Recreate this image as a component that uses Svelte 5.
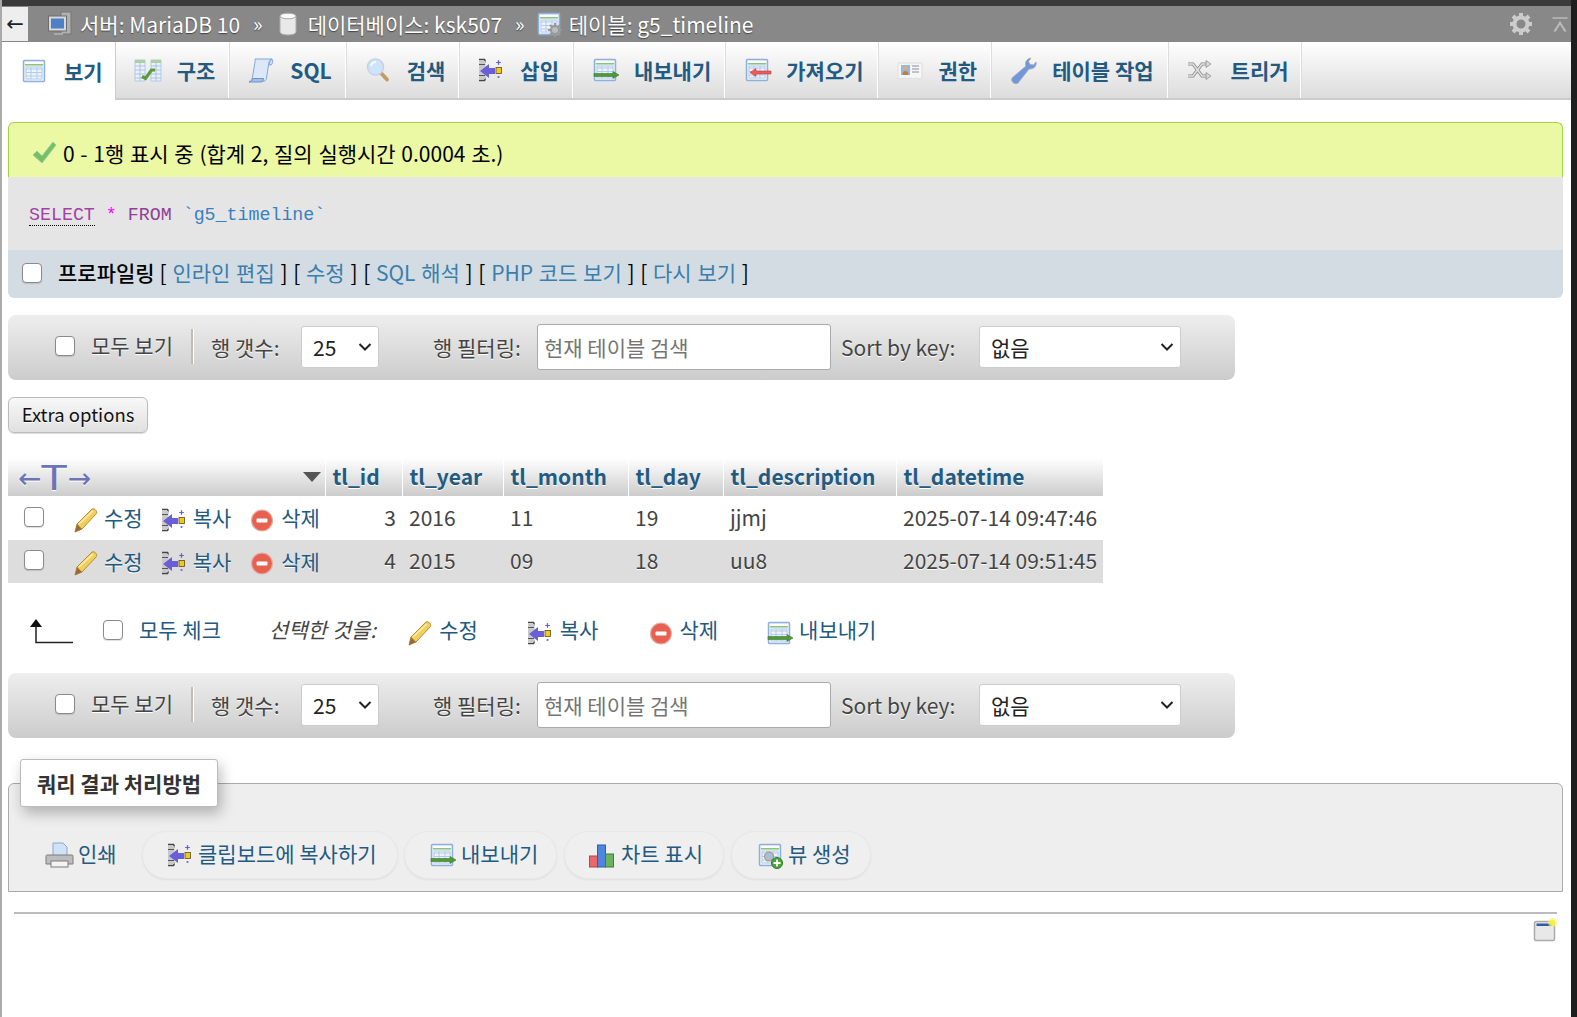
<script>
  const tabs = [
    ['table', '보기', true], ['structure', '구조'], ['sql', 'SQL'], ['search', '검색'], ['insert', '삽입'],
    ['export', '내보내기'], ['import', '가져오기'], ['priv', '권한'], ['ops', '테이블 작업'], ['trigger', '트리거']
  ];
  const rows = [
    [3, '2016', '11', '19', 'jjmj', '2025-07-14 09:47:46'],
    [4, '2015', '09', '18', 'uu8', '2025-07-14 09:51:45']
  ];
</script>

{#snippet grid()}
  <rect x="1.500" y="1.500" width="21" height="21" rx="1" fill="#edf3fb" stroke="#8db0dc" stroke-width="1.500"/>
  <rect x="3" y="3" width="18" height="2" fill="#fff"/>
  <rect x="3" y="5" width="18" height="1.500" fill="#8cc47a"/>
  <path d="M4 10h16M4 13.500h16M4 17h16M9 8v12M15 8v12M4 8h16v12H4z" stroke="#b4cbe8" fill="none"/>
{/snippet}

{#snippet film()}
  <path d="M0 1.500h6M6 1.500v3M0 22.500h6M6 22.500v-3" stroke="#444" stroke-width="1.500" fill="none"/>
  <rect x="0" y="3" width="6.500" height="18" fill="#c9c9c9"/>
  <path d="M0 6.500h6M0 17.500h6" stroke="#555" stroke-width="1.200"/>
  <path d="M1 13l9-7v4h6v6h-6v4z" fill="#6a5fd8"/>
  <rect x="17" y="9.500" width="5.500" height="6" fill="#f0c81e" stroke="#5a4f18" stroke-width=".8"/>
  <path d="M19.500 2v5M17 4.500h5" stroke="#7a72e0" stroke-width="1.200"/>
  <circle cx="19.500" cy="4.500" r="1" fill="#5a52d0"/>
  <circle cx="19.500" cy="19" r="1.100" fill="#6a63d6"/>
{/snippet}

{#snippet icon(n)}
  <svg class="ic" viewBox="0 0 24 24" aria-hidden="true">
    {#if n === 'table'}
      {@render grid()}
    {:else if n === 'structure'}
      <path d="M-1 2h10v21H-1zM15 2h10v21H15z" fill="#eaf1fa" stroke="#b4cbe8"/>
      <path d="M-1 2h10v3H-1zM15 2h10v3H15z" fill="#a9d2a0"/>
      <path d="M-1 8h10M-1 12h10M-1 16h10M-1 20h10M15 8h10M15 12h10M15 16h10M15 20h10M4 5v18M20 5v18" stroke="#9db9e0" stroke-width=".8"/>
      <path d="M6 18.500l3.500 2 6-8.500h3.500" fill="none" stroke="#5d9a3a" stroke-width="3.200"/>
    {:else if n === 'sql'}
      <path d="M6 1h17c-2.500 1-3 2-3.500 6l-2 13c-.4 2.500-2 3.500-4 3.500H0c2.500-.5 3-2 3.500-4.500L5.500 7c.3-2.500 1-4 .5-6z" fill="#dbe8f8" stroke="#84a6d6"/>
      <path d="M0 24c2.500-.5 3.500-2 3.500-3.500h11c0 2-1 3.500-2.500 3.500z" fill="#9fc0ea" stroke="#6d93c7"/>
      <path d="M20 7c.4-3 1.500-5 3-6 1.500 2 .5 5-1 6z" fill="#cfe0f5" stroke="#84a6d6"/>
    {:else if n === 'search'}
      <path d="M14.500 14.500l6.500 7" stroke="#c59a63" stroke-width="3.800" stroke-linecap="round"/>
      <circle cx="9.500" cy="9" r="8" fill="#cfe3fa" stroke="#c2d3e6" stroke-width="1.500"/>
      <path d="M5 8a5 5 0 0 1 5-4" fill="none" stroke="#fff" stroke-width="1.500"/>
    {:else if n === 'insert' || n === 'copy'}
      {@render film()}
    {:else if n === 'export'}
      {@render grid()}
      <path d="M1 15.500h19v-2l6 3.500-6 3.500v-2H1z" fill="#4f9a38" stroke="#3a7a28" stroke-width=".6"/>
    {:else if n === 'import'}
      {@render grid()}
      <path d="M26 13H11v-2.500L5 14.500l6 4V16h15z" fill="#ee5b5b" stroke="#c53b3b" stroke-width=".6"/>
    {:else if n === 'priv'}
      <path d="M0 5h24v15l-3 1-3-1-3 1-3-1-3 1-3-1-3 1-3-1z" fill="#f6f6f6" stroke="#ddd"/>
      <rect x="3" y="7" width="9" height="10" fill="#8cbbe8"/>
      <circle cx="7.500" cy="10" r="2.200" fill="#e2ab7c"/>
      <path d="M4.500 17c0-3 1.500-4 3-4s3 1 3 4z" fill="#c67a3d"/>
      <path d="M14 8h7M14 11h7M14 14h7" stroke="#aab3bb" stroke-width="1.300"/>
    {:else if n === 'ops'}
      <path d="M1 20L15 8c-1.500-3 0-7 5-8l-2.500 3.500 1.500 3 3.500.5L25 4c1 4-2.500 7.500-7 7L7 25c-2.500 2-7.500-.5-6-5z" fill="#6f98dc" stroke="#a6a6a6" stroke-width=".8"/>
    {:else if n === 'trigger'}
      <path d="M0 6h5l9 12h5M0 18h5l9-12h5" fill="none" stroke="#888" stroke-width="3.200"/>
      <path d="M0 6h5l9 12h5M0 18h5l9-12h5" fill="none" stroke="#e2e2e2" stroke-width="1.600"/>
      <path d="M18 2.500l5 3.500-5 3.500zM18 14.500l5 3.500-5 3.500z" fill="#d8d8d8" stroke="#888" stroke-width=".7"/>
    {:else if n === 'pencil'}
      <path d="M1 24l2-8L18 1c2.500-1 5.500 2 4.500 4.500L8 21z" fill="#f1cf5e" stroke="#b58f2b"/>
      <path d="M1 24l2-8 5 5z" fill="#9a6a3a"/>
      <path d="M5 16L19 3" stroke="#fbeeb0" stroke-width="1.500"/>
    {:else if n === 'del'}
      <circle cx="12" cy="12.500" r="10.500" fill="#e8604f" stroke="#e0b0a8" stroke-width="1.200"/>
      <rect x="6.500" y="10.500" width="11" height="4" rx="1" fill="#fff"/>
    {:else if n === 'print'}
      <path d="M7 0h10l4 4v9H7z" fill="#cfe2f8" stroke="#8aa8cf"/>
      <path d="M1 12h25c1 0 1 1 1 2v7H0v-7c0-1 0-2 1-2z" fill="#bdbdbd" stroke="#7c7c7c"/>
      <rect x="5" y="18" width="17" height="6" fill="#f4f4f4" stroke="#7c7c7c"/>
    {:else if n === 'chart'}
      <rect x="0.500" y="13" width="8" height="11" fill="#e9686a" stroke="#b44"/>
      <rect x="8.500" y="2" width="8" height="22" fill="#4f86dd" stroke="#2f5fb0"/>
      <rect x="16.500" y="11" width="8" height="13" fill="#6cb35c" stroke="#3f7f2e"/>
    {:else if n === 'view'}
      {@render grid()}
      <circle cx="11" cy="13.500" r="4.500" fill="#a9bfd8" stroke="#b08a5a"/>
      <circle cx="19" cy="20" r="5.500" fill="#4ea33a" stroke="#2f7a22"/>
      <path d="M19 16.500v7M15.500 20h7" stroke="#fff" stroke-width="1.800"/>
    {:else if n === 'server'}
      <rect x="13" y="0" width="10" height="22" fill="#b0b0b0" stroke="#777"/>
      <rect x="0.500" y="4" width="18" height="15" fill="#d8d8d8" stroke="#6d6d6d"/>
      <rect x="3" y="6.500" width="13" height="10" fill="#4f7fc8"/>
      <path d="M6 22h9" stroke="#aaa" stroke-width="2"/>
    {:else if n === 'db'}
      <path d="M4 4v16c0 4 16 4 16 0V4z" fill="#e8e8e8" stroke="#aaa"/>
      <ellipse cx="12" cy="4" rx="8" ry="2.800" fill="#fafafa" stroke="#aaa"/>
    {:else if n === 'tablecog'}
      {@render grid()}
      <path d="M18 11v14M11 18h14M13 13l10 10M23 13L13 23" stroke="#999" stroke-width="2.200"/>
      <circle cx="18" cy="18" r="4" fill="#bbb" stroke="#999" stroke-width="2"/>
    {:else if n === 'gear'}
      <path d="M12 1v5M12 18v5M1 12h5M18 12h5M4 4l4 4M16 16l4 4M20 4l-4 4M8 16l-4 4" stroke="#ccc" stroke-width="4"/>
      <circle cx="12" cy="12" r="6.500" fill="none" stroke="#ccc" stroke-width="4"/>
    {:else if n === 'collapse'}
      <path d="M2 3h20v2H2zM12 8L3 22h3.500L12 13l5.500 9H21z" fill="#bbb"/>
    {:else if n === 'check'}
      <path d="M1 14l4-4 5 5L21 1l3 3L10 22z" fill="#72c262" stroke="#a2c8a0" stroke-width="1"/>
    {:else if n === 'console'}
      <rect x="1.500" y="3.500" width="20" height="19" rx="1.500" fill="#e8e8e8" stroke="#aaa" stroke-width="1.500"/>
      <rect x="3.500" y="5.500" width="15" height="2.500" fill="#2f5ba8"/>
      <circle cx="19.500" cy="4.500" r="4.500" fill="#f8f56a" opacity=".7"/>
      <circle cx="19.500" cy="4.500" r="2.500" fill="#f4f13c"/>
    {/if}
  </svg>
{/snippet}

{#snippet navbar()}
  <div class="nav">
    <input type="checkbox" class="cb cb-all" />
    <span class="all">모두 보기</span>
    <span class="divider"></span>
    <span class="rows-l">행 갯수:</span>
    <select class="sel-rows"><option>25</option></select>
    <span class="filter-l">행 필터링:</span>
    <input class="filter" type="text" placeholder="현재 테이블 검색" />
    <span class="sort-l">Sort by key:</span>
    <select class="sel-key"><option>없음</option></select>
  </div>
{/snippet}

<div class="app">
  <div class="top"></div>
  <div class="crumb">
    <button class="back">←</button>
    <span class="c-ic c1">{@render icon('server')}</span><span>서버: MariaDB 10</span>
    <span class="sep">»</span>
    <span class="c-ic">{@render icon('db')}</span><span>데이터베이스: ksk507</span>
    <span class="sep">»</span>
    <span class="c-ic c3">{@render icon('tablecog')}</span><span>테이블: g5_timeline</span>
    <span class="gear">{@render icon('gear')}</span>
    <span class="coll">{@render icon('collapse')}</span>
  </div>
  <div class="tabs">
    {#each tabs as t}
      <a class="tab" class:active={t[2]} href="#top">{@render icon(t[0])}<span>{t[1]}</span></a>
    {/each}
  </div>

  <div class="content">
    <div class="msg"><span class="chk">{@render icon('check')}</span>0 - 1행 표시 중 (합계 2, 질의 실행시간 0.0004 초.)</div>
    <div class="sqlq"><span class="kw1">SELECT</span> <span class="star">*</span> <span class="kw2">FROM</span> <span class="id">`g5_timeline`</span></div>
    <div class="prof">
      <input type="checkbox" class="cb" />
      <b>프로파일링</b><span class="pl">[ <a href="#top">인라인 편집</a> ] [ <a href="#top">수정</a> ] [ <a href="#top">SQL 해석</a> ] [ <a href="#top">PHP 코드 보기</a> ] [ <a href="#top">다시 보기</a> ]</span>
    </div>

    {@render navbar()}

    <button class="extra">Extra options</button>

    <table>
      <colgroup><col class="w0"/><col class="w1"/><col class="w2"/><col class="w3"/><col class="w4"/><col class="w5"/><col class="w6"/></colgroup>
      <thead>
        <tr>
          <th class="first"><div class="th0"><span class="arrows"><span class="ar">←</span><span class="tt">T</span><span class="ar">→</span></span><span class="tri"></span></div></th>
          <th>tl_id</th><th>tl_year</th><th>tl_month</th><th>tl_day</th><th>tl_description</th><th>tl_datetime</th>
        </tr>
      </thead>
      <tbody>
        {#each rows as r}
          <tr>
            <td class="acts">
              <div class="acts-in">
                <input type="checkbox" class="cb cb-row" />
                <a class="a1" href="#top">{@render icon('pencil')}<span>수정</span></a>
                <a class="a2" href="#top">{@render icon('copy')}<span>복사</span></a>
                <a class="a3" href="#top">{@render icon('del')}<span>삭제</span></a>
              </div>
            </td>
            <td class="num">{r[0]}</td>
            <td>{r[1]}</td><td>{r[2]}</td><td>{r[3]}</td><td>{r[4]}</td><td>{r[5]}</td>
          </tr>
        {/each}
      </tbody>
    </table>

    <div class="bulk">
      <svg class="up" viewBox="0 0 45 26" aria-hidden="true"><path d="M8 1L2 9h12z" fill="#111"/><path d="M8 8v16.500h37" fill="none" stroke="#222" stroke-width="1.500"/></svg>
      <input type="checkbox" class="cb" />
      <a class="b-all" href="#top">모두 체크</a>
      <i class="b-sel">선택한 것을:</i>
      <a class="b b-e" href="#top">{@render icon('pencil')}<span>수정</span></a>
      <a class="b b-c" href="#top">{@render icon('copy')}<span>복사</span></a>
      <a class="b b-d" href="#top">{@render icon('del')}<span>삭제</span></a>
      <a class="b b-x" href="#top">{@render icon('export')}<span>내보내기</span></a>
    </div>

    {@render navbar()}

    <div class="fs">
      <div class="legend">쿼리 결과 처리방법</div>
      <div class="ops">
        <a class="op plain" href="#top">{@render icon('print')}<span>인쇄</span></a>
        <a class="op o2" href="#top">{@render icon('copy')}<span>클립보드에 복사하기</span></a>
        <a class="op o3" href="#top">{@render icon('export')}<span>내보내기</span></a>
        <a class="op o4" href="#top">{@render icon('chart')}<span>차트 표시</span></a>
        <a class="op o5" href="#top">{@render icon('view')}<span>뷰 생성</span></a>
      </div>
    </div>
    <div class="rule"></div>
    <div class="cons">{@render icon('console')}</div>
  </div>
</div>

<style>
  :global(body) { margin: 0; background: #fff; overflow: hidden; }
  .app {
    box-sizing: border-box;
    width: 1577px; height: 1017px;
    border-left: 2px solid #aaa;
    border-right: 6px solid #1e1e1e;
    font-family: "Noto Sans CJK KR", "Noto Sans", sans-serif;
    font-size: 21px;
    color: #444;
    background: #fff;
    overflow: hidden;
  }
  a { text-decoration: none; color: #235a81; }
  .ic { width: 24px; height: 24px; display: block; flex: none; overflow: visible; }
  .top { height: 6px; background: #3a3a3a; margin-left: -2px; }
  .crumb {
    height: 36px; background: #888; color: #fff;
    display: flex; align-items: center;
    text-shadow: 0 1px 1px #444;
    line-height: 36px;
  }
  .back {
    width: 26px; height: 34px; margin: 0; padding: 0; border: 0;
    background: #eee; color: #222; font: 21px "DejaVu Sans", sans-serif;
  }
  .c-ic { margin-right: 8px; }
  .c1 { margin-left: 20px; }
  .c3 { margin-left: -1px; }
  .sep { margin: 0 13px; font-size: 20px; }
  .gear { margin-left: auto; margin-right: 18px; }
  .coll { margin-right: 2px; }
  .coll :global(svg) { width: 18px; height: 18px; }

  .tabs {
    display: flex; height: 58px; box-sizing: border-box;
    background: linear-gradient(#fff, #dcdcdc);
    border-bottom: 2px solid #ccc;
  }
  .tab {
    display: flex; align-items: center; gap: 17px;
    padding: 0 13px 0 20px;
    border-right: 1px solid #fff;
    font-weight: 700; color: #235a81;
    box-shadow: 1px 0 0 #ddd;
  }
  .tab.active { background: #fff; height: 58px; gap: 18px; padding-right: 12px; box-shadow: none; border-right: 1px solid #ccc; }
  .tab:last-child { gap: 19px; padding-right: 11px; }

  .content { margin: 22px 8px 0 6px; }
  .msg {
    height: 55px; box-sizing: border-box;
    background: #ebf8a4; border: 1px solid #a2d246; border-bottom: 0;
    border-radius: 6px 6px 0 0;
    display: flex; align-items: center; color: #000;
    padding: 6px 0 0 23px; word-spacing: 1px;
  }
  .chk { margin-right: 7px; }
  .sqlq {
    height: 73px; background: #e5e5e5;
    font: 18.300px/76px "Liberation Mono", monospace;
    padding-left: 21px; box-sizing: border-box;
  }
  .kw1 { color: #a540a5; border-bottom: 1px dotted #000; }
  .star { color: #f0f; }
  .kw2 { color: #8f3f97; }
  .id { color: #3a7fc0; }
  .prof {
    height: 48px; background: #d3dce3; border-radius: 0 0 6px 6px;
    display: flex; align-items: center; color: #000; box-sizing: border-box; padding-left: 14px;
    white-space: pre; word-spacing: 1px;
  }
  .prof .cb { margin-top: -2px; }
  .prof b { font-weight: 500; margin: -4px 5px 0 16px; }
  .pl { margin-top: -4px; }
  .prof a { color: #3a7ead; }
  .cb {
    appearance: none; margin: 0; width: 20px; height: 20px; flex: none;
    background: #fff; border: 1px solid #8a8a8a; border-radius: 4px; box-sizing: border-box;
    box-shadow: 0 1px 1px #0002;
  }

  .nav {
    margin-top: 17px; width: 1227px; height: 65px; border-radius: 8px; padding-bottom: 2px;
    background: linear-gradient(#eee, #ccc);
    display: flex; align-items: center; white-space: nowrap; box-sizing: border-box;
    text-shadow: 0 1px 0 #fff;
  }
  .cb-all { margin-left: 47px; margin-top: -2px; }
  .all { margin-left: 16px; margin-top: -3px; }
  .divider { width: 3px; height: 35px; background: #c4bcb0; border-right: 1px solid #fff; margin: 0 17px 0 18px; box-sizing: border-box; }
  .rows-l { width: 70px; }
  select {
    appearance: none;
    font: inherit; color: #222; height: 42px;
    border: 1px solid #ccc; border-radius: 3px; box-sizing: border-box; padding-left: 11px;
    text-shadow: none;
    background: #fff url("data:image/svg+xml,%3Csvg xmlns='http://www.w3.org/2000/svg' width='14' height='8'%3E%3Cpath d='M1.500 1l5.500 5.500L12.500 1' fill='none' stroke='%23222' stroke-width='2'/%3E%3C/svg%3E") no-repeat right 6px center;
  }
  .sel-rows { width: 78px; margin-left: 20px; }
  .filter-l { margin-left: 54px; width: 88px; }
  .filter {
    width: 294px; height: 46px; box-sizing: border-box; margin-left: 16px;
    font: inherit; border: 1px solid #aaa; border-radius: 3px; padding: 0 6px; background: #fff;
  }
  .filter::placeholder { color: #757575; }
  .sort-l { margin-left: 10px; width: 116px; }
  .sel-key { width: 202px; margin-left: 22px; }

  .extra {
    display: block; margin-top: 17px; width: 140px; height: 36px; padding: 0 0 2px;
    font: inherit; font-size: 18.500px; color: #111;
    border: 1px solid #bbb; border-radius: 6px; background: linear-gradient(#f8f8f8, #e0e0e0);
    box-shadow: 0 1px 1px #0002; text-shadow: 0 1px 0 #fff;
  }

  table {
    margin-top: 25px; border-collapse: collapse; table-layout: fixed; width: 1095px;
  }
  .w0 { width: 317px; } .w1 { width: 77px; } .w2 { width: 101px; } .w3 { width: 125px; }
  .w4 { width: 95px; } .w5 { width: 173px; } .w6 { width: 207px; }
  th {
    height: 38px; padding: 0 7px 2px; box-sizing: border-box; text-align: left; font-weight: 700; color: #235a81;
    background: linear-gradient(#fff, #ccc); border-left: 1px solid #fff;
    text-shadow: 0 1px 0 #fff; white-space: nowrap;
  }
  th.first { border-left: 0; padding: 0; }
  .th0 { display: flex; align-items: center; justify-content: space-between; padding: 0 4px 0 10px; height: 38px; color: #6c74b8; }
  .arrows { display: flex; align-items: center; font-weight: 400; height: 38px; padding-top: 4px; box-sizing: border-box; }
  .ar { font: 28px/34px "DejaVu Sans", sans-serif; }
  .tt { font: 33px/34px "DejaVu Sans", sans-serif; display: inline-block; transform: scaleX(1.250); margin: 0 3px; }
  .tri { width: 0; height: 0; border: 9px solid transparent; border-top: 10px solid #555; border-bottom: 0; }
  td {
    height: 43.500px; padding: 0 7px 2px; box-sizing: border-box; white-space: nowrap; text-shadow: 0 1px 0 #fff;
  }
  tbody tr:nth-child(2) td { background: #ddd; }
  td.acts { padding: 4px 0 0; }
  .acts-in { display: flex; align-items: center; }
  .cb-row { margin: -6px 0 0 16px; }
  .acts-in a, .b, .op { display: flex; align-items: center; }
  .acts-in a span { margin-top: -5px; }
  .a1 { margin-left: 30px; gap: 6px; }
  .a2 { margin-left: 19px; gap: 7px; }
  .a3 { margin-left: 19px; gap: 7px; }
  td.num { text-align: right; padding-right: 6px; }

  .bulk {
    height: 90px; display: flex; align-items: center; box-sizing: border-box;
    padding: 4px 0 0 20px; white-space: nowrap;
  }
  .up { width: 45px; height: 26px; flex: none; margin-top: 2px; }
  .bulk .cb { margin-left: 30px; }
  .b-all { margin-left: 16px; margin-top: -2px; }
  .b-sel { margin-left: 48px; margin-top: -2px; }
  .b { gap: 7px; margin-top: 6px; }
  .b span { margin-top: -8px; }
  .b-e { margin-left: 32px; }
  .b-c { margin-left: 50px; gap: 8px; }
  .b-d { margin-left: 51px; gap: 6px; }
  .b-x { margin-left: 49px; gap: 8px; }

  .bulk + .nav { margin-top: 0; }
  .fs {
    margin-top: 45px; height: 109px; box-sizing: border-box;
    background: #eee; border: 1px solid #aaa; border-radius: 6px 6px 0 0;
  }
  .legend {
    width: 198px; height: 48px; box-sizing: border-box; margin: -25px 0 0 11px;
    background: #fff; border: 1px solid #bbb; border-radius: 3px;
    font-weight: 700; font-size: 21px; text-align: center; line-height: 46px; color: #333;
    box-shadow: 3px 6px 14px #0004; position: relative;
  }
  .ops { display: flex; margin-top: 24px; margin-left: 20px; gap: 7px; white-space: nowrap; }
  .op {
    height: 48px; box-sizing: border-box; border-radius: 24px;
    background: #efefef; border: 1px solid #e8e8e8; box-shadow: 0 1px 2px #0001;
    color: #235a81; gap: 6px; padding-left: 25px;
  }
  .op span { margin-top: -4px; }
  .plain { background: none; border: 0; box-shadow: none; width: 106px; padding-left: 17px; gap: 8px; }
  .o2 { width: 256px; }
  .o3 { width: 153px; margin-left: -1px; gap: 7px; }
  .o4 { width: 160px; padding-left: 24px; gap: 8px; }
  .o5 { width: 140px; padding-left: 26px; }

  .rule { height: 2px; background: #bbb; margin: 20px 6px 0 6px; }
  .cons { display: flex; justify-content: flex-end; margin: 4px 6px 0 0; }
</style>
